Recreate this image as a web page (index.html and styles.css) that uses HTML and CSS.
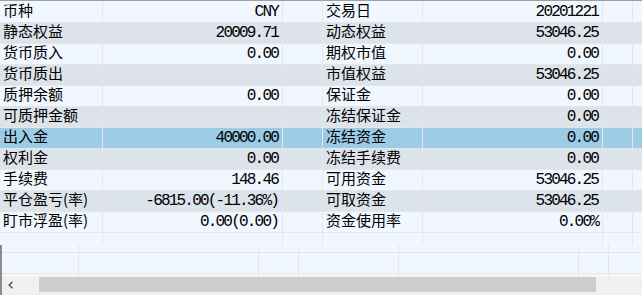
FILE: index.html
```html
<!DOCTYPE html>
<html>
<head>
<meta charset="utf-8">
<link rel="stylesheet" href="styles.css">
</head>
<body>
<div class="view">
  <div class="grid">
    <div class="row light"><div class="c lbl">币种</div><div class="c val">CNY</div><div class="c"></div><div class="c lbl">交易日</div><div class="c val">20201221</div><div class="c"></div><div class="c last"></div></div>
    <div class="row gray"><div class="c lbl">静态权益</div><div class="c val">20009.71</div><div class="c"></div><div class="c lbl">动态权益</div><div class="c val">53046.25</div><div class="c"></div><div class="c last"></div></div>
    <div class="row light"><div class="c lbl">货币质入</div><div class="c val">0.00</div><div class="c"></div><div class="c lbl">期权市值</div><div class="c val">0.00</div><div class="c"></div><div class="c last"></div></div>
    <div class="row gray"><div class="c lbl">货币质出</div><div class="c val"></div><div class="c"></div><div class="c lbl">市值权益</div><div class="c val">53046.25</div><div class="c"></div><div class="c last"></div></div>
    <div class="row light"><div class="c lbl">质押余额</div><div class="c val">0.00</div><div class="c"></div><div class="c lbl">保证金</div><div class="c val">0.00</div><div class="c"></div><div class="c last"></div></div>
    <div class="row gray"><div class="c lbl">可质押金额</div><div class="c val"></div><div class="c"></div><div class="c lbl">冻结保证金</div><div class="c val">0.00</div><div class="c"></div><div class="c last"></div></div>
    <div class="row sel"><div class="c lbl">出入金</div><div class="c val">40000.00</div><div class="c"></div><div class="c lbl">冻结资金</div><div class="c val">0.00</div><div class="c"></div><div class="c last"></div></div>
    <div class="row gray"><div class="c lbl">权利金</div><div class="c val">0.00</div><div class="c"></div><div class="c lbl">冻结手续费</div><div class="c val">0.00</div><div class="c"></div><div class="c last"></div></div>
    <div class="row light"><div class="c lbl">手续费</div><div class="c val">148.46</div><div class="c"></div><div class="c lbl">可用资金</div><div class="c val">53046.25</div><div class="c"></div><div class="c last"></div></div>
    <div class="row gray"><div class="c lbl">平仓盈亏(率)</div><div class="c val">-6815.00(-11.36%)</div><div class="c"></div><div class="c lbl">可取资金</div><div class="c val">53046.25</div><div class="c"></div><div class="c last"></div></div>
    <div class="row light"><div class="c lbl">盯市浮盈(率)</div><div class="c val">0.00(0.00)</div><div class="c"></div><div class="c lbl">资金使用率</div><div class="c val">0.00%</div><div class="c"></div><div class="c last"></div></div>
    <div class="row light tail"><div class="c"></div><div class="c"></div><div class="c"></div><div class="c"></div><div class="c"></div><div class="c"></div><div class="c last"></div></div>
  </div>
  <div class="lower">
    <div class="lrow h8"><div class="c"></div><div class="c"></div><div class="c"></div><div class="c"></div><div class="c"></div><div class="c"></div><div class="c last"></div></div>
    <div class="lrow h21"><div class="c"></div><div class="c"></div><div class="c"></div><div class="c"></div><div class="c"></div><div class="c"></div><div class="c last"></div></div>
    <div class="lrow h3"><div class="c"></div><div class="c"></div><div class="c"></div><div class="c"></div><div class="c"></div><div class="c"></div><div class="c last"></div></div>
  </div>
  <div class="hscroll">
    <div class="arrow"><svg width="8" height="8" viewBox="0 0 8 8"><path d="M5.5 0.8 L2.2 4 L5.5 7.2" fill="none" stroke="#606060" stroke-width="1.6"/></svg></div>
    <div class="track"><div class="thumb"></div></div>
  </div>
</div>
</body>
</html>
```

FILE: styles.css
```css
html, body {
  margin: 0;
  padding: 0;
  background: #f0f0f0;
}
.view {
  width: 642px;
  height: 295px;
  overflow: hidden;
  background: #f0f7ff;
}
.grid {
  border-top: 1px solid #a0a0a0;
  padding-top: 1px;
}
.row {
  display: grid;
  grid-template-columns: 103px 180px 40px 100px 180px 30px 1fr;
  height: 21px;
  box-sizing: border-box;
  border-bottom: 1px solid #e6e6e6;
}
.row.tail {
  height: 12px;
  border-bottom: none;
}
.light { background: #f0f7ff; }
.gray { background: #dde3ea; }
.sel { background: #9ccbe6; }
.c {
  box-sizing: border-box;
  border-right: 1px solid #e6e6e6;
  white-space: nowrap;
  color: #000;
}
.c.last { border-right: none; }
.lbl {
  font-family: "Noto Sans CJK SC", "Liberation Sans", sans-serif;
  font-size: 15px;
  line-height: 16px;
  padding-left: 3px;
}
.val {
  font-family: "Liberation Mono", monospace;
  font-size: 16px;
  line-height: 18px;
  letter-spacing: -1.8px;
  text-align: right;
  padding-right: 4px;
  padding-top: 1px;
}
.lower {
  height: 32px;
  border-left: 2px solid #8c8c8c;
  background: #f0f7ff;
}
.lrow {
  display: grid;
  grid-template-columns: 77px 180px 40px 100px 180px 30px 1fr;
  box-sizing: border-box;
  border-bottom: 1px solid #e6e6e6;
}
.lrow.h8 { height: 8px; }
.lrow.h21 { height: 21px; }
.lrow.h3 { height: 3px; border-bottom: none; }
.hscroll {
  display: flex;
  height: 18px;
  background: #f0f0f0;
  border-left: 2px solid #8c8c8c;
  box-sizing: border-box;
}
.arrow {
  width: 37px;
  height: 15px;
  display: flex;
  align-items: center;
  padding-left: 5px;
  box-sizing: border-box;
}
.track {
  flex: 1;
}
.thumb {
  width: 557px;
  height: 15px;
  background: #cdcdcd;
}
```
